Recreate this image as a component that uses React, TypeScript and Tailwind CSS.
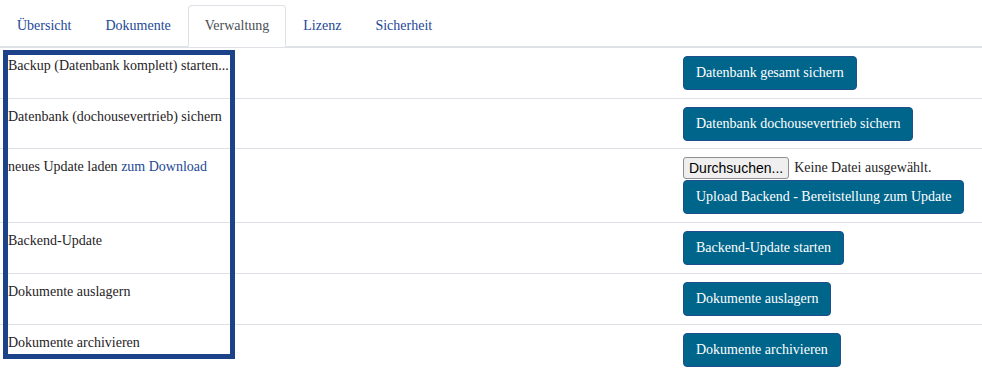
import React from "react";

const tabs = ["Übersicht", "Dokumente", "Verwaltung", "Lizenz", "Sicherheit"];

function Btn({ children }: { children: React.ReactNode }) {
  return (
    <button className="inline-block bg-[#00658b] text-white border border-[#1d4f8c] rounded-[4px] px-3 py-[6px] leading-[20px] text-[14px] font-['Liberation_Serif',serif]">
      {children}
    </button>
  );
}

function Row({ left, right, tight }: { left: React.ReactNode; right: React.ReactNode; tight?: boolean }) {
  return (
    <div className="grid grid-cols-[675px_1fr] border-t border-[#dee2e6]">
      <div className={tight ? "px-2 pt-2 pb-[7px] leading-[20px]" : "px-2 pt-2 pb-2 leading-[20px]"}>{left}</div>
      <div className={tight ? "px-2 pt-2 pb-[7px] leading-[20px]" : "px-2 pt-2 pb-2 leading-[20px]"}>{right}</div>
    </div>
  );
}

export default function App() {
  return (
    <div className="relative w-[982px] h-[378px] bg-white overflow-hidden font-['Liberation_Serif',serif] text-[14px] text-[#1f2326]">
      <nav className="flex pt-[5px] border-b border-[#dee2e6]">
        {tabs.map((t) => (
          <div
            key={t}
            className={
              t === "Verwaltung"
                ? "-mb-px px-4 py-2 leading-[24px] border border-[#dee2e6] border-b-white rounded-t-[4px] bg-white text-[#495057]"
                : "-mb-px px-4 py-2 leading-[24px] border border-transparent text-[#1c4896]"
            }
          >
            {t}
          </div>
        ))}
      </nav>
      <div>
        <Row left="Backup (Datenbank komplett) starten..." right={<Btn>Datenbank gesamt sichern</Btn>} />
        <Row tight left="Datenbank (dochousevertrieb) sichern" right={<Btn>Datenbank dochousevertrieb sichern</Btn>} />
        <Row
          left={
            <span>
              neues Update laden <span className="text-[#1c4896]">zum Download</span>
            </span>
          }
          right={
            <div className="flex flex-col items-start">
              <div className="flex items-center h-[22px] mb-px">
                <span className="inline-flex items-center h-[22px] px-[5px] border border-[#8f8f8f] rounded-[3px] bg-[#efefef] text-black font-['Liberation_Sans',sans-serif] text-[14px] leading-none">
                  Durchsuchen...
                </span>
                <span className="ml-[5px]">Keine Datei ausgewählt.</span>
              </div>
              <Btn>Upload Backend - Bereitstellung zum Update</Btn>
            </div>
          }
        />
        <Row left="Backend-Update" right={<Btn>Backend-Update starten</Btn>} />
        <Row left="Dokumente auslagern" right={<Btn>Dokumente auslagern</Btn>} />
        <Row left="Dokumente archivieren" right={<Btn>Dokumente archivieren</Btn>} />
      </div>
      <div className="absolute left-[3px] top-[50px] w-[232px] h-[309px] border-[5px] border-[#1c438a] pointer-events-none" />
    </div>
  );
}
